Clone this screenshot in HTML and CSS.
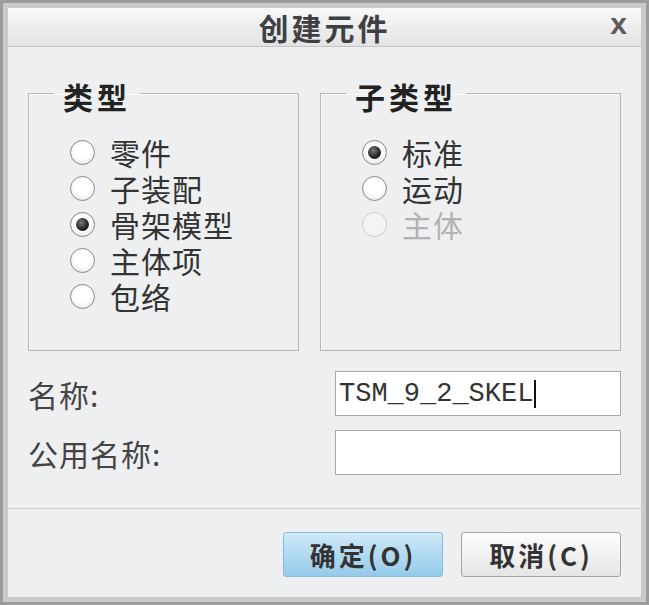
FILE: index.html
```html
<!DOCTYPE html>
<html lang="zh-CN">
<head>
<meta charset="utf-8">
<title>创建元件</title>
<link rel="stylesheet" href="styles.css">
</head>
<body>
<div class="frame">
  <div class="dialog">
    <div class="titlebar">
      <span class="title">创建元件</span>
      <span class="close">x</span>
    </div>
    <div class="main">
      <div class="groups">
        <fieldset class="group group-type">
          <legend>类型</legend>
          <ul class="radios">
            <li><span class="radio"></span><span>零件</span></li>
            <li><span class="radio"></span><span>子装配</span></li>
            <li><span class="radio checked"></span><span>骨架模型</span></li>
            <li><span class="radio"></span><span>主体项</span></li>
            <li><span class="radio"></span><span>包络</span></li>
          </ul>
        </fieldset>
        <fieldset class="group group-sub">
          <legend>子类型</legend>
          <ul class="radios">
            <li><span class="radio checked"></span><span>标准</span></li>
            <li><span class="radio"></span><span>运动</span></li>
            <li class="disabled"><span class="radio"></span><span>主体</span></li>
          </ul>
        </fieldset>
      </div>
      <div class="fields">
        <span class="label">名称:</span>
        <div class="input"><span>TSM_9_2_SKEL</span><span class="caret"></span></div>
        <span class="label">公用名称:</span>
        <div class="input"></div>
      </div>
    </div>
    <div class="sep"></div>
    <div class="footer">
      <button class="btn btn-ok">确定(O)</button>
      <button class="btn btn-cancel">取消(C)</button>
    </div>
  </div>
</div>
</body>
</html>
```

FILE: styles.css
```css
* { box-sizing: border-box; }
html, body { margin: 0; padding: 0; }
body {
  width: 649px;
  height: 605px;
  background: #9d9d9d;
  font-family: "Noto Sans CJK SC", "Noto Sans", sans-serif;
}
.frame {
  width: 649px;
  height: 605px;
  border: 3px solid #9c9c9c;
  background: #cacaca;
  padding: 5px;
}
.dialog {
  width: 100%;
  height: 100%;
  background: #eeeff1;
  display: flex;
  flex-direction: column;
}
.titlebar {
  height: 39px;
  flex: none;
  display: grid;
  grid-template-columns: 1fr auto 1fr;
  align-items: center;
  background: linear-gradient(#f8f8f8, #e3e3e3);
  border-bottom: 1px solid #c4c4c4;
}
.title {
  grid-column: 2;
  font-weight: 700;
  font-size: 30px;
  line-height: 38px;
  letter-spacing: 3px;
  color: #3e4045;
}
.close {
  grid-column: 3;
  justify-self: end;
  margin-right: 14px;
  font-family: "Liberation Sans", sans-serif;
  font-weight: 700;
  font-size: 30px;
  line-height: 30px;
  padding-bottom: 6px;
  color: #5b5b5b;
}
.main {
  flex: 1;
  padding: 27px 20px 0 20px;
}
.groups {
  display: flex;
  gap: 21px;
  height: 277px;
}
.group {
  margin: 0;
  padding: 0;
  min-width: 0;
  border: 1px solid #b5b7ba;
  box-shadow: inset 1px 1px 0 #fbfbfb;
}
.group-type { width: 271px; }
.group-sub { flex: 1; }
.group legend {
  margin-left: 25px;
  padding: 6px 9px 0 9px;
  font-weight: 700;
  font-size: 30px;
  line-height: 32px;
  letter-spacing: 4px;
  color: #222;
}
.radios {
  list-style: none;
  margin: 22px 0 0 41px;
  padding: 0;
}
.radios li {
  display: flex;
  align-items: center;
  height: 36px;
  line-height: 36px;
  gap: 15px;
  font-size: 30px;
  letter-spacing: 1px;
  color: #333;
}
.radio {
  flex: none;
  width: 25px;
  height: 25px;
  border-radius: 50%;
  border: 1px solid #8a8a8a;
  background: radial-gradient(circle at 50% 40%, #ffffff 0%, #ffffff 45%, #dedede 100%);
  display: flex;
  align-items: center;
  justify-content: center;
}
.radio.checked::after {
  content: "";
  width: 13px;
  height: 13px;
  border-radius: 50%;
  background: radial-gradient(circle at 40% 35%, #777 0%, #222 60%, #000 100%);
}
.radios li.disabled { color: #b2b2b2; }
.radios li.disabled .radio {
  border-color: #cdcdcd;
  background: #f4f4f4;
}
.fields {
  margin-top: 20px;
  display: grid;
  grid-template-columns: 1fr 286px;
  row-gap: 14px;
  align-items: center;
}
.label {
  font-size: 30px;
  line-height: 36px;
  letter-spacing: 1px;
  color: #444;
}
.input {
  height: 45px;
  background: #fff;
  border: 1px solid #a8a8a8;
  display: flex;
  align-items: center;
  padding-left: 3px;
  font-family: "Liberation Mono", monospace;
  font-size: 27px;
  color: #333;
}
.caret {
  width: 2px;
  height: 28px;
  background: #111;
  margin-left: 1px;
}
.sep {
  flex: none;
  height: 1px;
  background: #cdd0d3;
}
.footer {
  flex: none;
  height: 88px;
  display: flex;
  justify-content: flex-end;
  align-items: flex-start;
  gap: 18px;
  padding: 23px 20px 0 20px;
}
.btn {
  width: 160px;
  height: 45px;
  border-radius: 3px;
  font-family: "Noto Sans CJK SC", "Noto Sans", sans-serif;
  font-weight: 700;
  font-size: 26px;
  line-height: 36px;
  letter-spacing: 3px;
  color: #333;
  padding: 0;
}
.btn-ok {
  background: linear-gradient(#d0e9f8, #93cbea);
  border: 1px solid #86b9da;
}
.btn-cancel {
  background: linear-gradient(#fdfdfd, #e5e5e5);
  border: 1px solid #a5a5a5;
}
```
